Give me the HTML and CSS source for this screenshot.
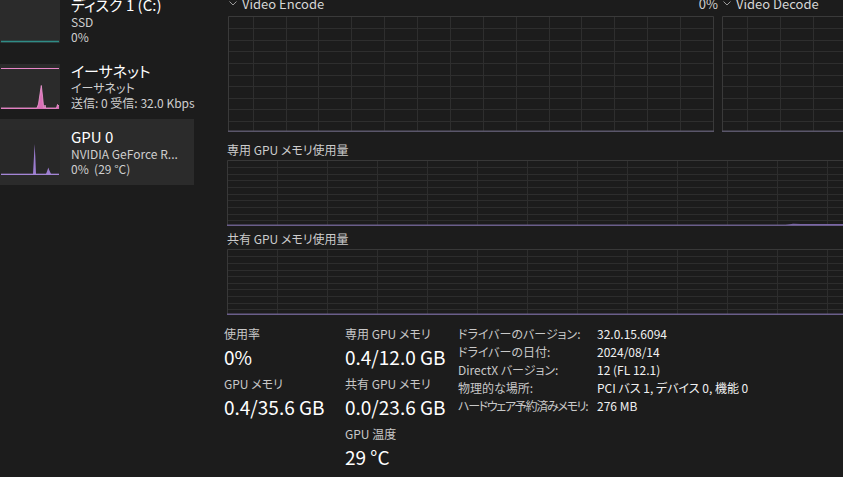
FILE: index.html
```html
<!DOCTYPE html>
<html lang="ja">
<head>
  <meta charset="UTF-8">
  <title>パフォーマンス - GPU 0</title>
  <link rel="stylesheet" href="styles.css">
</head>
<body>
  <div class="app">
    <aside class="sidebar">
      <div class="perf-item">
        <svg class="thumb" width="60" height="45" viewBox="0 0 60 45">
          <rect x="0" y="0" width="60" height="45" fill="#2b2b2b"/>
          <path d="M1 43.5H59" stroke="#2f8c86" stroke-width="1.5"/>
        </svg>
        <div class="perf-text">
          <div class="perf-title">ディスク 1 (C:)</div>
          <div class="perf-sub">SSD</div>
          <div class="perf-sub">0%</div>
        </div>
      </div>
      <div class="perf-item">
        <svg class="thumb" width="60" height="45" viewBox="0 0 60 45">
          <rect x="0" y="0" width="60" height="45" fill="#2b2b2b"/>
          <path d="M1 4.5H59" stroke="#e886c8" stroke-width="1"/>
          <path d="M1 44 L37 44 L38.5 40 L40 30 L41.3 21.5 L42.5 32 L43.7 44 L44.5 44 L45 41 L45.6 44 L56.5 44 L57.5 40.5 L59 42 L59 45 L1 45 Z" fill="#d96fb6"/>
          <path d="M1 44 L37 44 L38.5 40 L40 30 L41.3 21.5 L42.5 32 L43.7 44 L44.5 44 L45 41 L45.6 44 L56.5 44 L57.5 40.5 L59 42" fill="none" stroke="#f39ad6" stroke-width="0.8"/>
        </svg>
        <div class="perf-text">
          <div class="perf-title">イーサネット</div>
          <div class="perf-sub">イーサネット</div>
          <div class="perf-sub">送信: 0 受信: 32.0 Kbps</div>
        </div>
      </div>
      <div class="perf-item selected">
        <svg class="thumb" width="60" height="45" viewBox="0 0 60 45">
          <rect x="0" y="0" width="60" height="45" fill="#282828"/>
          <path d="M1 44 L33 44 L34 26 L34.6 14 L35.3 26 L36 44 L46 44 L47.5 40 L48.3 37.5 L49.2 40 L51 44 L59 44 L59 45 L1 45 Z" fill="#9b7ccf"/>
          <path d="M1 44.2H59" stroke="#a98ad9" stroke-width="1"/>
        </svg>
        <div class="perf-text">
          <div class="perf-title">GPU 0</div>
          <div class="perf-sub">NVIDIA GeForce R...</div>
          <div class="perf-sub">0%&nbsp; (29 °C)</div>
        </div>
      </div>
    </aside>

    <main class="detail">
      <div class="engine-row">
        <div class="engine engine-encode">
          <div class="engine-head">
            <svg class="chev" width="8" height="5" viewBox="0 0 8 5"><path d="M0.5 0.5L4 4L7.5 0.5" fill="none" stroke="#9a9a9a" stroke-width="1"/></svg>
            <span class="engine-name">Video Encode</span>
            <span class="engine-pct">0%</span>
          </div>
          <svg class="graph" width="486" height="116" viewBox="0 0 486 116">
            <path d="M25.5 0V116M58.5 0V116M90.5 0V116M123.5 0V116M156.5 0V116M189.5 0V116M222.5 0V116M255.5 0V116M288.5 0V116M321.5 0V116M353.5 0V116M386.5 0V116M419.5 0V116M452.5 0V116" stroke="#2e2e2e"/>
            <path d="M0 12.5H486M0 24.5H486M0 35.5H486M0 47.5H486M0 59.5H486M0 70.5H486M0 82.5H486M0 93.5H486M0 105.5H486" stroke="#2e2e2e"/>
            <path d="M0.5 115V0.5H485.5V115" fill="none" stroke="#3a3a3a"/>
            <path d="M0 115.3H486" stroke="#5a566a" stroke-width="1.4"/>
          </svg>
        </div>
        <div class="engine engine-decode">
          <div class="engine-head">
            <svg class="chev" width="8" height="5" viewBox="0 0 8 5"><path d="M0.5 0.5L4 4L7.5 0.5" fill="none" stroke="#9a9a9a" stroke-width="1"/></svg>
            <span class="engine-name">Video Decode</span>
          </div>
          <svg class="graph" width="130" height="116" viewBox="0 0 130 116">
            <path d="M25.5 0V116M58.5 0V116M91.5 0V116M124.5 0V116" stroke="#2e2e2e"/>
            <path d="M0 12.5H130M0 24.5H130M0 35.5H130M0 47.5H130M0 59.5H130M0 70.5H130M0 82.5H130M0 93.5H130M0 105.5H130" stroke="#2e2e2e"/>
            <path d="M0.5 115V0.5H130" fill="none" stroke="#3a3a3a"/>
            <path d="M0 115.3H130" stroke="#5a566a" stroke-width="1.4"/>
          </svg>
        </div>
      </div>

      <div class="mem-label">専用 GPU メモリ使用量</div>
      <svg class="graph" width="620" height="66" viewBox="0 0 620 66">
        <path d="M50.5 0V66M100.5 0V66M150.5 0V66M200.5 0V66M250.5 0V66M300.5 0V66M350.5 0V66M400.5 0V66M450.5 0V66M500.5 0V66M550.5 0V66M600.5 0V66" stroke="#2d2d2d"/>
        <path d="M0 7.5H620M0 14.5H620M0 20.5H620M0 27.5H620M0 34.5H620M0 40.5H620M0 47.5H620M0 54.5H620M0 60.5H620" stroke="#2d2d2d"/>
        <path d="M0.5 65V0.5H620" fill="none" stroke="#383838"/>
        <path d="M553 66 L560 64.8 L566 63.8 L574 64 L620 64 L620 66 Z" fill="#8a6cc0"/>
        <path d="M0 65.3H620" stroke="#6a5e8a" stroke-width="1.4"/>
      </svg>

      <div class="mem-label">共有 GPU メモリ使用量</div>
      <svg class="graph" width="620" height="66" viewBox="0 0 620 66">
        <path d="M50.5 0V66M100.5 0V66M150.5 0V66M200.5 0V66M250.5 0V66M300.5 0V66M350.5 0V66M400.5 0V66M450.5 0V66M500.5 0V66M550.5 0V66M600.5 0V66" stroke="#2d2d2d"/>
        <path d="M0 7.5H620M0 14.5H620M0 21.5H620M0 27.5H620M0 34.5H620M0 40.5H620M0 47.5H620M0 54.5H620M0 60.5H620" stroke="#2d2d2d"/>
        <path d="M0.5 65V0.5H620" fill="none" stroke="#383838"/>
        <path d="M0 65.3H620" stroke="#6a5e8a" stroke-width="1.4"/>
      </svg>

      <div class="stats">
        <div class="stat-col stat-col-1">
          <div class="stat">
            <div class="stat-label">使用率</div>
            <div class="stat-value">0%</div>
          </div>
          <div class="stat">
            <div class="stat-label">GPU メモリ</div>
            <div class="stat-value">0.4/35.6 GB</div>
          </div>
        </div>
        <div class="stat-col stat-col-2">
          <div class="stat">
            <div class="stat-label">専用 GPU メモリ</div>
            <div class="stat-value">0.4/12.0 GB</div>
          </div>
          <div class="stat">
            <div class="stat-label">共有 GPU メモリ</div>
            <div class="stat-value">0.0/23.6 GB</div>
          </div>
          <div class="stat">
            <div class="stat-label">GPU 温度</div>
            <div class="stat-value">29 °C</div>
          </div>
        </div>
        <dl class="props">
          <dt>ドライバーのバージョン:</dt><dd>32.0.15.6094</dd>
          <dt>ドライバーの日付:</dt><dd>2024/08/14</dd>
          <dt>DirectX バージョン:</dt><dd>12 (FL 12.1)</dd>
          <dt>物理的な場所:</dt><dd>PCI バス 1, デバイス 0, 機能 0</dd>
          <dt class="tight">ハードウェア予約済みメモリ:</dt><dd>276 MB</dd>
        </dl>
      </div>
    </main>
  </div>
</body>
</html>
```

FILE: styles.css
```css
html, body {
  margin: 0;
  padding: 0;
  width: 843px;
  height: 477px;
  overflow: hidden;
  background: #1c1c1c;
  color: #fff;
  font-family: "Noto Sans CJK JP", "Noto Sans", sans-serif;
  font-feature-settings: "palt";
}
.app {
  display: flex;
  height: 100%;
}
svg {
  display: block;
}

/* left list */
.sidebar {
  width: 194px;
  flex-shrink: 0;
  margin-top: -13px;
}
.perf-item {
  display: flex;
  align-items: flex-start;
  gap: 11px;
  height: 66px;
  box-sizing: border-box;
  padding-top: 11px;
}
.perf-item.selected {
  background: #2b2b2b;
}
.thumb {
  flex-shrink: 0;
}
.perf-text {
  margin-top: -2px;
  white-space: nowrap;
}
.perf-title {
  font-size: 15px;
  line-height: 18px;
  height: 18px;
  color: #fff;
}
.perf-sub {
  font-size: 12px;
  line-height: 15px;
  height: 15px;
  color: #cfcfcf;
}

/* right side */
.detail {
  flex: 1;
  min-width: 0;
  padding-left: 33px;
}
.engine-row {
  display: flex;
  gap: 8px;
  margin-top: -6px;
  margin-left: 1px;
}
.engine-head {
  display: flex;
  align-items: center;
  height: 18px;
  margin-bottom: 4px;
  font-size: 13px;
  color: #d6d6d6;
}
.chev {
  margin: 0 5px 0 1px;
}
.engine-name {
  flex: 1;
}
.engine-pct {
  margin-right: -4px;
  color: #d0d0d0;
}
.mem-label {
  font-size: 12px;
  line-height: 16px;
  height: 16px;
  color: #cccccc;
  margin: 10px 0 2px;
}
.graph + .mem-label {
  margin-top: 5px;
}

/* numbers at the bottom */
.stats {
  display: flex;
  align-items: flex-start;
  margin-top: 10px;
  margin-left: -3px;
}
.stat-col-1 {
  width: 121px;
}
.stat-col-2 {
  width: 113px;
}
.stat {
  margin-bottom: 4px;
}
.stat-label {
  font-size: 12px;
  line-height: 18px;
  height: 18px;
  color: #c8c8c8;
}
.stat-value {
  font-size: 19px;
  line-height: 28px;
  height: 28px;
  color: #fff;
}
.props {
  display: grid;
  grid-template-columns: 139px auto;
  align-content: start;
  margin: 0;
  font-size: 12px;
  line-height: 18px;
}
.props dt,
.props dd {
  height: 18px;
  white-space: nowrap;
}
.props dt {
  color: #c8c8c8;
}
.props dt.tight {
  letter-spacing: -1.3px;
}
.props dd {
  margin: 0;
  color: #f0f0f0;
}
```
